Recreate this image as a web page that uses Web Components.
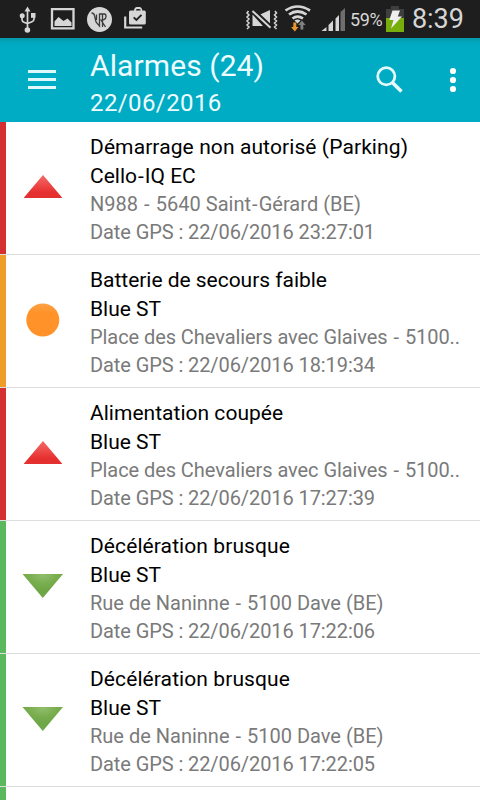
<!DOCTYPE html>
<html lang="fr">
<head>
<meta charset="utf-8">
<title>Alarmes</title>
<style>
html, body { margin: 0; height: 100%; overflow: hidden; background: #fff; }
body { font-family: Roboto, "Noto Sans", sans-serif; }
</style>
</head>
<body>
<alarm-app></alarm-app>
<script>
const define = (name, html, setup) => {
  const template = document.createElement('template');
  template.innerHTML = html;
  customElements.define(name, class extends HTMLElement {
    constructor() {
      super();
      this.attachShadow({ mode: 'open' }).append(template.content.cloneNode(true));
    }
    connectedCallback() { if (setup) setup(this, this.shadowRoot); }
  });
};

define('status-bar', `
<style>
:host { display: flex; height: 38px; background: #1e1e1e; color: #d6d6d6; white-space: nowrap; }
svg { display: block; flex: none; }
.battery { font-size: 18px; line-height: 38px; width: 36px; margin-top: 1px; letter-spacing: -.35px; }
.clock { font-size: 27px; line-height: 39px; letter-spacing: -.05px; }
</style>
<svg width="160" height="38" viewBox="0 0 160 38" fill="none" stroke="#d6d6d6">
  <g stroke-width="1.7"><path d="M27.5 10v20M22 16v3.5q0 2 2 2.8l3.5 1.4M34 16v3q0 2-2 2.8l-4.500 1.700"/></g>
  <g fill="#d6d6d6" stroke="none"><path d="M27.500 6.500l3 5h-6z"/><circle cx="22.200" cy="15.800" r="2.500"/><path d="M31 13h4.500v4.800H31z"/><circle cx="27.400" cy="30" r="2.800"/></g>
  <path d="M52 9.200h21.500v19.200H52z" stroke-width="2.300"/>
  <path d="M54.500 26v-4.500l4-4.500 5 4 4-2.500 4 4V26z" fill="#d6d6d6" stroke="none"/>
  <circle cx="99.500" cy="19.500" r="12.500" fill="#d6d6d6" stroke="none"/>
  <path d="M91.500 13q2.500 0 3 2.500l1.500 6.500 3.500 4V14h5q1.500 0 1.500 2.500t-2 3l-3 .5 4.500 7M96.500 14.500V20M102.500 14.500V27" stroke="#3b3b3b" stroke-width="1.300"/>
  <path d="M125.200 16.500v11h17" stroke-width="2.200"/>
  <path d="M130.500 10.500H134q.4-3.500 3-3.500h2.500q2.400 0 2.800 3.500h2q1.500 0 1.500 1.500v11q0 1.500-1.500 1.500h-13.800q-1.500 0-1.500-1.500V12q0-1.500 1.500-1.500z" fill="#d6d6d6" stroke="none"/>
  <path d="M135.800 10.500q0-1.500 1.500-1.500h1.900q1.500 0 1.500 1.500z" fill="#1e1e1e" stroke="none"/>
  <path d="M133.700 17.300l2.700 2.700 5.100-5.100" stroke="#1e1e1e" stroke-width="1.800"/>
</svg>
<svg width="190" height="38" viewBox="160 0 190 38" fill="none">
  <path d="M248.500 11l-1.500 2 2 2-2 2 2 2-2 2 2 2-2 2 2 2-2 2M275 11l1.500 2-2 2 2 2-2 2 2 2-2 2 2 2-2 2 2 2" stroke="#d6d6d6" stroke-width="1.500"/>
  <path d="M252.500 14.500l10.500 11.500H252.500zM259 15l11-5v15z" fill="#d6d6d6"/>
  <path d="M253.500 10.500l18.500 17.500" stroke="#1e1e1e" stroke-width="4"/>
  <path d="M252.500 11l18 16.800" stroke="#d6d6d6" stroke-width="2"/>
  <g stroke="#d6d6d6" stroke-width="2.700"><path d="M285.500 10.500q12-8 24.500 0M289 14.500q8.500-6 17.500 0M292.500 18.500q5-3.700 10.500 0"/></g>
  <path d="M294.500 20.500q3-2 6 0l-3 3z" fill="#d6d6d6"/>
  <path d="M293.300 22.500h3v4.500h2.200l-3.700 4.500-3.700-4.500h2.200z" fill="#e8972c"/>
  <path d="M300.500 29.500V25h-2.300l3.700-4.500 3.700 4.500h-2.300v4.500z" fill="#818181"/>
  <path d="M321.500 31l5-4v4zM328.500 31v-6l4.500-4.500V31zM335.500 31V18.500L339 15v16z" fill="#d6d6d6"/>
  <path d="M340.500 31V12l4.500-4v23z" fill="#6e6e6e"/>
</svg>
<span class="battery">59%</span>
<svg width="26" height="38" viewBox="386 0 26 38">
  <path d="M391 6h8v3h5v9h-18V9h5z" fill="#3e3e3e"/><path d="M386 18h18v14h-18z" fill="#78ae0c"/>
  <path d="M392.500 10.500h7.500l-2.200 6h4.200L391 28.500l2.500-8.500h-4.200z" fill="#eee"/>
</svg>
<span class="clock">8:39</span>`);

define('app-bar', `
<style>
:host { display: flex; height: 84px; box-sizing: border-box; color: #effcff; background: linear-gradient(#0798aa, #00a9c1 5px, #00acc4 12px); }
svg { display: block; flex: none; }
.heading { width: 260px; padding-top: 10px; white-space: nowrap; }
slot { display: block; }
slot:not([name]) { font-size: 30px; line-height: 36px; letter-spacing: .1px; }
slot[name=date] { font-size: 24px; line-height: 36px; letter-spacing: .4px; margin-top: 1px; }
</style>
<svg width="90" height="84" viewBox="0 0 90 84"><path d="M28 33.500h28M28 41.500h28M28 49.500h28" stroke="#dff8fc" stroke-width="3"/></svg>
<div class="heading"><slot></slot><slot name="date"></slot></div>
<svg width="130" height="84" viewBox="350 38 130 84">
  <circle cx="386.300" cy="76.300" r="8.600" fill="none" stroke="#e5fafd" stroke-width="2.800"/>
  <path d="M392.300 82.500l9.200 9" stroke="#e5fafd" stroke-width="3.600"/>
  <g fill="#fff"><circle cx="453" cy="71" r="3.100"/><circle cx="453" cy="80" r="3.100"/><circle cx="453" cy="89" r="3.100"/></g>
</svg>`);

const icons = {
  high: `<defs><linearGradient id="g" x2="0" y2="1"><stop stop-color="#f36a68"/><stop offset=".5" stop-color="#ec4443"/><stop offset=".75" stop-color="#e63030"/><stop offset="1" stop-color="#e33030"/></linearGradient></defs><path d="M43 53l19 22.500v.5H24v-.5z" fill="url(#g)"/>`,
  medium: `<defs><linearGradient id="g" x2="0" y2="1"><stop stop-color="#fba144"/><stop offset=".3" stop-color="#ff9228"/><stop offset="1" stop-color="#ff9129"/></linearGradient></defs><circle cx="42.800" cy="65" r="16.500" fill="url(#g)"/>`,
  low: `<defs><radialGradient id="g" cx=".5" cy=".05" r=".6"><stop stop-color="#91bd6c"/><stop offset=".6" stop-color="#78ad4e"/><stop offset="1" stop-color="#6fa746"/></radialGradient></defs><path d="M22.500 53h40.500L42.800 77z" fill="url(#g)"/>`
};

define('severity-icon', `<style>:host, svg { display: block; }</style><svg width="84" height="132" viewBox="6 0 84 132"></svg>`,
  (host, root) => { root.querySelector('svg').innerHTML = icons[host.getAttribute('level')] || ''; });

define('alarm-row', `
<style>
:host { --stripe: #5cb85c; display: grid; grid-template-columns: 6px 84px 1fr; height: 132px; border-bottom: 1px solid #dedede; overflow: hidden; flex: none; }
:host([level=high]) { --stripe: #d43031; }
:host([level=medium]) { --stripe: #ee9e28; }
.stripe { background: var(--stripe); }
.text { padding-top: 11px; white-space: nowrap; color: #000; font-size: 21px; line-height: 29px; }
slot { display: block; }
.detail { color: #7a7a7a; font-size: 20px; line-height: 28px; margin-top: -1px; }
slot[name=time] { letter-spacing: -.085px; }
</style>
<div class="stripe"></div>
<div class="icon"></div>
<div class="text">
  <slot name="event"></slot><slot name="vehicle"></slot>
  <div class="detail"><slot name="place"></slot><slot name="time"></slot></div>
</div>`, (host, root) => {
  const icon = document.createElement('severity-icon');
  icon.setAttribute('level', host.getAttribute('level'));
  root.querySelector('.icon').replaceChildren(icon);
});

// Level, event, vehicle, place, time, letter spacing of the event and place lines
const alarms = [
  ['high', 'Démarrage non autorisé (Parking)', 'Cello-IQ EC', 'N988 - 5640 Saint-Gérard (BE)', '23:27:01', .1, .03],
  ['medium', 'Batterie de secours faible', 'Blue ST', 'Place des Chevaliers avec Glaives - 5100..', '18:19:34', -.03, -.07],
  ['high', 'Alimentation coupée', 'Blue ST', 'Place des Chevaliers avec Glaives - 5100..', '17:27:39', .02, -.07],
  ['low', 'Décélération brusque', 'Blue ST', 'Rue de Naninne - 5100 Dave (BE)', '17:22:06', .09, 0],
  ['low', 'Décélération brusque', 'Blue ST', 'Rue de Naninne - 5100 Dave (BE)', '17:22:05', .09, 0],
  ['low', '', '', '', '', 0, 0]
];
const dash = text => text.replace(/-/g, '<span style="padding:0 1px">-</span>');

define('alarm-app', `
<style>:host { display: flex; flex-direction: column; width: 480px; height: 800px; overflow: hidden; }</style>
<status-bar></status-bar>
<app-bar>Alarmes (24)<span slot="date">22/06/2016</span></app-bar>
${alarms.map(([level, event, vehicle, place, time, eventGap, placeGap]) => `<alarm-row level="${level}">${event ? `<span slot="event" style="letter-spacing:${eventGap}px">${event}</span><span slot="vehicle">${dash(vehicle)}</span><span slot="place" style="letter-spacing:${placeGap}px">${dash(place)}</span><span slot="time">Date GPS : 22/06/2016 ${time}</span>` : ''}</alarm-row>`).join('')}`);
</script>
</body>
</html>
